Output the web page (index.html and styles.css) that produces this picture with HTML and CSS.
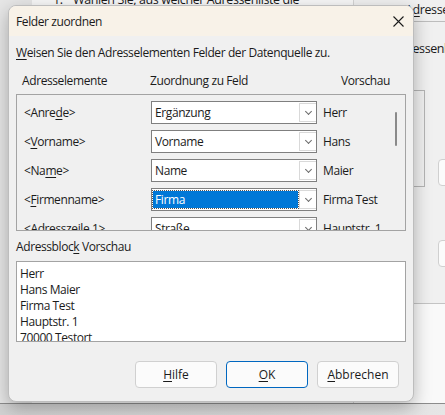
FILE: index.html
```html
<!DOCTYPE html>
<html lang="de">
<head>
<meta charset="UTF-8" />
<meta name="viewport" content="width=device-width, initial-scale=1" />
<title>Felder zuordnen</title>
<link rel="stylesheet" href="styles.css">
</head>
<body>

<!-- Assistent im Hintergrund -->
<div class="backwin">
  <div class="back-main">
    <p class="step"><span class="num">1.</span>Wählen Sie, aus welcher Adressenliste die</p>
  </div>
  <div class="back-side">
    <div class="side-head">A<u>d</u>ressenblock</div>
    <div class="side-line">Adressenliste</div>
    <div class="side-frame"></div>
    <div class="side-btn first"></div>
    <div class="side-btn"></div>
    <div class="side-foot"></div>
  </div>
</div>

<!-- Dialog -->
<div class="dialog">
  <div class="titlebar">
    <span>Felder zuordnen</span>
    <svg class="close" width="11" height="11" viewBox="0 0 11 11">
      <path d="M0.5 0.5 L10.5 10.5 M10.5 0.5 L0.5 10.5" stroke="#1b1b1b" stroke-width="1.1" fill="none"/>
    </svg>
  </div>

  <div class="content">
    <p class="intro"><u>W</u>eisen Sie den Adresselementen Felder der Datenquelle zu.</p>

    <div class="heads">
      <span>Adresselemente</span>
      <span>Zuordnung zu Feld</span>
      <span>Vorschau</span>
    </div>

    <div class="fieldlist">
      <div class="rows">
        <div class="row">
          <span>&lt;Anre<u>d</u>e&gt;</span>
          <div class="combo"><span class="val">Ergänzung</span><span class="drop"><i></i></span></div>
          <span class="prev">Herr</span>
        </div>
        <div class="row">
          <span>&lt;<u>V</u>orname&gt;</span>
          <div class="combo"><span class="val">Vorname</span><span class="drop"><i></i></span></div>
          <span class="prev">Hans</span>
        </div>
        <div class="row">
          <span>&lt;Na<u>m</u>e&gt;</span>
          <div class="combo"><span class="val">Name</span><span class="drop"><i></i></span></div>
          <span class="prev">Maier</span>
        </div>
        <div class="row">
          <span>&lt;<u>F</u>irmenname&gt;</span>
          <div class="combo active"><span class="val">Firma</span><span class="drop"><i></i></span></div>
          <span class="prev">Firma Test</span>
        </div>
        <div class="row">
          <span>&lt;Adresszeile 1&gt;</span>
          <div class="combo"><span class="val">Straße</span><span class="drop"><i></i></span></div>
          <span class="prev">Hauptstr. 1</span>
        </div>
      </div>
      <div class="scrollbar"><div class="thumb"></div></div>
    </div>

    <p class="label">Adressbloc<u>k</u> Vorschau</p>
    <div class="preview">
      Herr<br>
      Hans Maier<br>
      Firma Test<br>
      Hauptstr. 1<br>
      70000 Testort
    </div>

    <div class="buttons">
      <button class="btn"><u>H</u>ilfe</button>
      <button class="btn default"><u>O</u>K</button>
      <button class="btn"><u>A</u>bbrechen</button>
    </div>
  </div>
</div>

</body>
</html>
```

FILE: styles.css
```css
/* --- Basics --- */
* {
  margin: 0; padding: 0; box-sizing: border-box;
}
html, body {
  width: 100%; height: 100%;
  overflow: hidden;
}
body {
  position: relative;
  background: linear-gradient(90deg, #d2d2d2 0%, #dadada 60%, #e6e6e6 100%);
  font-family: 'Segoe UI', 'Open Sans', 'Noto Sans', sans-serif;
  font-size: 12px;
  letter-spacing: -0.4px;
  color: #1b1b1b;
}
u {
  text-decoration-thickness: 1px;
  text-underline-offset: 2px;
}

/* --- Window behind the dialog --- */
.backwin {
  position: absolute;
  left: 0; top: 0;
  width: 100%; height: 404px;
  display: flex;
  background: #e6e6e6;
  border-bottom: 1px solid #8c8c8c;
}
.back-main {
  width: 321px;
  margin-left: 32px;
  background: #f7f7f7;
  overflow: hidden;
}
.step {
  margin-top: -9px;
  padding-left: 21px;
  font-size: 12.5px;
  white-space: nowrap;
}
.step .num {
  display: inline-block;
  width: 20px;
}
.back-side {
  flex: 1;
  display: flex;
  flex-direction: column;
  background: #f0f0f0;
  border-left: 1px solid #d4d4d4;
  overflow: hidden;
  white-space: nowrap;
}
.side-head {
  height: 22px;
  padding: 1px 0 0 51px;
  border-bottom: 1px solid #bdbdbd;
  font-size: 12.5px;
}
.side-line {
  margin-top: 18px;
  padding-left: 39px;
  font-size: 12.5px;
}
.side-frame {
  margin-top: 33px;
  width: 71px;
  height: 97px;
  border: 1px solid #b4b4b4;
}
.side-btn {
  margin: 0 0 0 84px;
  width: 40px;
  height: 27px;
  background: #fbfbfb;
  border: 1px solid #d0d0d0;
  border-radius: 4px;
}
.side-btn.first {
  margin-top: -28px;
}
.side-btn + .side-btn {
  margin-top: 54px;
}
.side-foot {
  margin-top: 36px;
  flex: 1;
  background: #f9f9f9;
  border-top: 1px solid #c4c4c4;
}

/* --- Dialog --- */
.dialog {
  position: absolute;
  left: 8px; top: 5px;
  width: 406px; height: 397px;
  display: flex;
  flex-direction: column;
  background: #f0f0f0;
  border: 1px solid #bdbdbd;
  border-radius: 8px;
  box-shadow: 0 6px 18px rgba(0,0,0,0.28);
  overflow: hidden;
}
.titlebar {
  height: 30px;
  flex-shrink: 0;
  display: flex;
  align-items: center;
  justify-content: space-between;
  padding: 1px 9px 0 7px;
  background: #f8f2e8;
}
.close {
  display: block;
}
.content {
  padding: 0 7px;
  display: flex;
  flex-direction: column;
}
.intro {
  margin-top: 9px;
  line-height: 16px;
}

/* --- Column heads & field list --- */
.heads {
  margin-top: 12px;
  padding-left: 6px;
  display: grid;
  grid-template-columns: 128px 191px auto;
  line-height: 16px;
}
.fieldlist {
  margin-top: 5px;
  height: 137px;
  display: flex;
  border: 1px solid #a3a3a3;
  overflow: hidden;
}
.rows {
  flex: 1;
  padding: 6px 0 0 7px;
  display: flex;
  flex-direction: column;
  gap: 6px;
}
.row {
  display: grid;
  grid-template-columns: 127px 166px auto;
  align-items: center;
  height: 23px;
  white-space: nowrap;
}
.prev {
  padding-left: 6px;
}
.combo {
  height: 23px;
  display: flex;
  align-items: stretch;
  background: #fff;
  border: 1px solid #7f7f7f;
}
.combo .val {
  flex: 1;
  display: flex;
  align-items: center;
  padding-left: 3px;
}
.combo.active .val {
  margin: 2px 0 2px 1px;
  padding-left: 2px;
  background: #0078d7;
  color: #fff;
  outline: 1px dotted #555;
}
.drop {
  width: 17px;
  margin: 1px 0 1px 1px;
  display: flex;
  align-items: center;
  justify-content: center;
  border: 1px solid #d9d9d9;
  border-right: none;
}
.drop i {
  width: 5px; height: 5px;
  margin-top: -3px;
  border-right: 1px solid #6b6b6b;
  border-bottom: 1px solid #6b6b6b;
  transform: rotate(45deg);
}
.scrollbar {
  width: 16px;
  padding: 17px 0 0 6px;
}
.thumb {
  width: 2px;
  height: 34px;
  border-radius: 1px;
  background: #8a8a8a;
}

/* --- Address block preview --- */
.label {
  margin-top: 8px;
  line-height: 16px;
}
.preview {
  margin-top: 6px;
  height: 81px;
  padding: 4px 0 0 3px;
  line-height: 16px;
  background: #fff;
  border: 1px solid #a3a3a3;
  overflow: hidden;
}

/* --- Buttons --- */
.buttons {
  margin-top: 19px;
  margin-right: 7px;
  display: flex;
  justify-content: flex-end;
  gap: 9px;
}
.btn {
  width: 82px;
  height: 27px;
  font: inherit;
  color: inherit;
  background: #fbfbfb;
  border: 1px solid #d0d0d0;
  border-radius: 4px;
}
.btn.default {
  border-color: #0067c0;
}
```
